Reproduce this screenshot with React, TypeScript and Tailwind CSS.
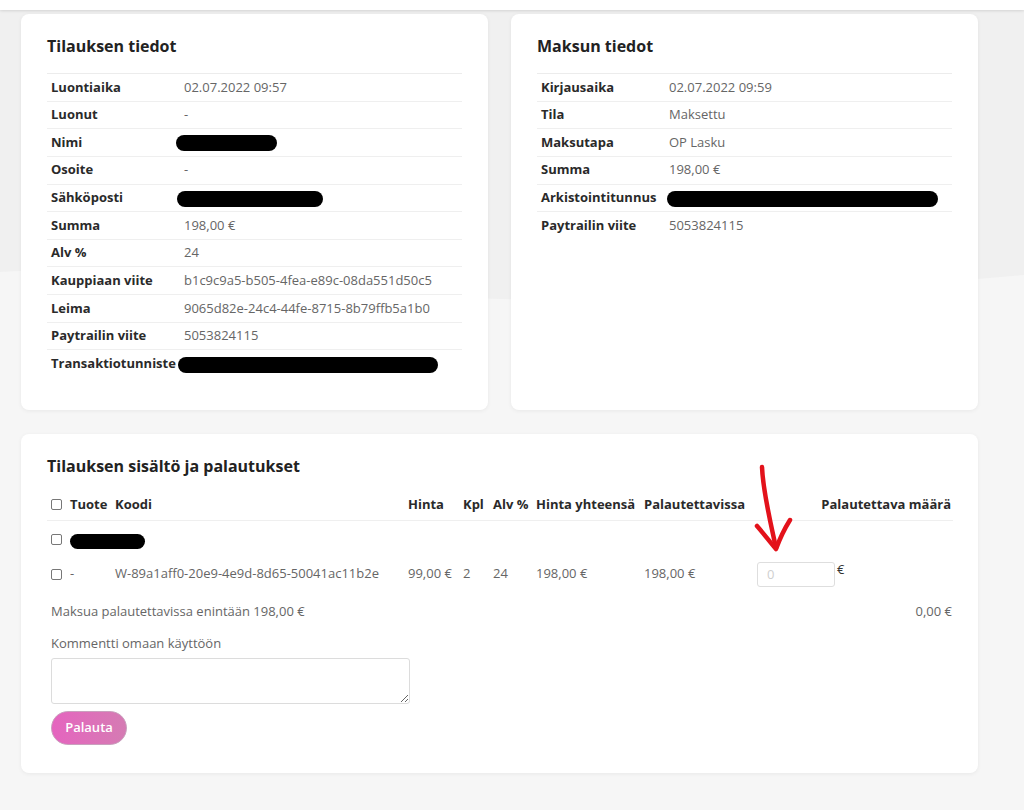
const font = { fontFamily: '"Open Sans", "Noto Sans", sans-serif' };

type Row = { label: string; value?: string; redact?: number; shift?: number };

const orderRows: Row[] = [
  { label: "Luontiaika", value: "02.07.2022 09:57" },
  { label: "Luonut", value: "-" },
  { label: "Nimi", redact: 101, shift: -8 },
  { label: "Osoite", value: "-" },
  { label: "Sähköposti", redact: 146, shift: -7 },
  { label: "Summa", value: "198,00 €" },
  { label: "Alv %", value: "24" },
  { label: "Kauppiaan viite", value: "b1c9c9a5-b505-4fea-e89c-08da551d50c5" },
  { label: "Leima", value: "9065d82e-24c4-44fe-8715-8b79ffb5a1b0" },
  { label: "Paytrailin viite", value: "5053824115" },
  { label: "Transaktiotunniste", redact: 260, shift: -6 },
];

const paymentRows: Row[] = [
  { label: "Kirjausaika", value: "02.07.2022 09:59" },
  { label: "Tila", value: "Maksettu" },
  { label: "Maksutapa", value: "OP Lasku" },
  { label: "Summa", value: "198,00 €" },
  { label: "Arkistointitunnus", redact: 271, shift: -2 },
  { label: "Paytrailin viite", value: "5053824115" },
];

function Redacted({ width, shift = 0 }: { width: number; shift?: number }) {
  return (
    <span
      className="inline-block h-[16px] rounded-full bg-black align-middle"
      style={{ width, marginLeft: shift }}
    />
  );
}

function Checkbox() {
  return (
    <input
      type="checkbox"
      className="block h-[11px] w-[11px] appearance-none rounded-[2px] border border-[#777] bg-white"
    />
  );
}

function InfoCard({
  title,
  rows,
  labelWidth,
}: {
  title: string;
  rows: Row[];
  labelWidth: number;
}) {
  return (
    <div className="rounded-lg bg-white px-[26px] pt-[20px] pb-8 shadow-[0_1px_4px_rgba(0,0,0,0.06)]">
      <h2 className="h-[24px] text-[16px] leading-[24px] font-bold text-[#222]">
        {title}
      </h2>
      <div className="mt-[15px] border-t border-[#ececec]">
        {rows.map((r, i) => (
          <div
            key={r.label}
            className={`flex h-[27.65px] items-center ${
              i < rows.length - 1 ? "border-b border-[#efefef]" : ""
            }`}
          >
            <div
              className="shrink-0 pl-1 text-[13px] font-bold text-[#2a2a2a]"
              style={{ width: labelWidth }}
            >
              {r.label}
            </div>
            <div className="text-[13px] whitespace-nowrap text-[#666]">
              {r.redact ? <Redacted width={r.redact} shift={r.shift} /> : r.value}
            </div>
          </div>
        ))}
      </div>
    </div>
  );
}

// red hand-drawn arrow pointing at the refund input
function Arrow() {
  return (
    <svg
      className="pointer-events-none absolute left-[750px] top-[462px]"
      width="50"
      height="95"
      viewBox="0 0 50 95"
      fill="none"
      stroke="#e3121b"
      strokeWidth="4.5"
      strokeLinecap="round"
      strokeLinejoin="round"
    >
      <path d="M12 5 C13 30, 20 58, 26 86" />
      <path d="M7 64 C14 72, 20 80, 26 87 C30 76, 35 66, 40 58" />
    </svg>
  );
}

export default function App() {
  const th = "px-1 text-left text-[13px] font-bold text-[#2a2a2a] whitespace-nowrap";
  const td = "px-1 text-[13px] text-[#666] whitespace-nowrap";
  return (
    <div className="relative min-h-[810px] w-[1024px] overflow-hidden bg-[#f6f6f6]" style={font}>
      <svg
        className="absolute inset-0"
        width="1024"
        height="810"
        viewBox="0 0 1024 810"
      >
        <path
          d="M0 0 H1024 V275 C900 285, 760 300, 560 300 C350 300, 150 262, 0 272 Z"
          fill="#f0f0f0"
        />
      </svg>

      <div className="relative h-[10px] bg-white shadow-[0_1px_3px_rgba(0,0,0,0.12)]" />

      <div className="relative box-content w-[957px] pt-[4px] pl-[21px]">
        <div className="grid grid-cols-2 gap-[23px]">
          <InfoCard title="Tilauksen tiedot" rows={orderRows} labelWidth={137} />
          <InfoCard title="Maksun tiedot" rows={paymentRows} labelWidth={132} />
        </div>

        <div className="mt-[24px] rounded-lg bg-white px-[26px] pt-[20px] pb-[28px] shadow-[0_1px_4px_rgba(0,0,0,0.06)]">
          <h2 className="h-[24px] text-[16px] leading-[24px] font-bold text-[#222]">
            Tilauksen sisältö ja palautukset
          </h2>
          <table className="mt-[12px] w-[906px] table-fixed border-collapse">
            <colgroup>
              <col className="w-[19px]" />
              <col className="w-[45px]" />
              <col className="w-[293px]" />
              <col className="w-[55px]" />
              <col className="w-[30px]" />
              <col className="w-[43px]" />
              <col className="w-[108px]" />
              <col className="w-[113px]" />
              <col className="w-[200px]" />
            </colgroup>
            <thead>
              <tr className="h-[30px] border-b border-[#efefef]">
                <th className="px-1">
                  <Checkbox />
                </th>
                <th className={th}>Tuote</th>
                <th className={th}>Koodi</th>
                <th className={th}>Hinta</th>
                <th className={th}>Kpl</th>
                <th className={th}>Alv %</th>
                <th className={th}>Hinta yhteensä</th>
                <th className={th}>Palautettavissa</th>
                <th className={`${th} pr-[2px] text-right`}>Palautettava määrä</th>
              </tr>
            </thead>
            <tbody>
              <tr className="h-[38px]">
                <td className="px-1">
                  <Checkbox />
                </td>
                <td colSpan={8} className="px-1">
                  <span className="inline-block h-[15px] w-[75px] rounded-full bg-black align-middle" />
                </td>
              </tr>
              <tr className="h-[32px]">
                <td className="px-1">
                  <Checkbox />
                </td>
                <td className={td}>-</td>
                <td className={td}>W-89a1aff0-20e9-4e9d-8d65-50041ac11b2e</td>
                <td className={td}>99,00 €</td>
                <td className={td}>2</td>
                <td className={td}>24</td>
                <td className={td}>198,00 €</td>
                <td className={td}>198,00 €</td>
                <td className="px-1">
                  <div className="flex items-start">
                    <input
                      type="text"
                      placeholder="0"
                      className="h-[25px] w-[78px] rounded-[3px] border border-[#dedede] px-[9px] text-[13px] text-[#666] outline-none placeholder:text-[#cfcfcf]"
                    />
                    <span className="-mt-[2px] ml-[2px] text-[13px] text-[#333]">€</span>
                  </div>
                </td>
              </tr>
            </tbody>
          </table>

          <div className="mt-[12px] flex justify-between pl-1 text-[13px] text-[#666]">
            <span>Maksua palautettavissa enintään 198,00 €</span>
            <span>0,00 €</span>
          </div>

          <div className="mt-[12px] px-1 text-[13px] text-[#666]">Kommentti omaan käyttöön</div>
          <div className="mt-[5px] px-1">
            <textarea className="block h-[46px] w-[359px] resize rounded-[3px] border border-[#dcdcdc] bg-white" />
          </div>
          <div className="mt-[7px] px-1">
            <button className="h-[34px] w-[76px] rounded-full border border-[#c9a0bd] bg-gradient-to-r from-[#e564bf] to-[#d57bb3] text-[13px] font-semibold text-white">
              Palauta
            </button>
          </div>
        </div>
      </div>

      <Arrow />
    </div>
  );
}
